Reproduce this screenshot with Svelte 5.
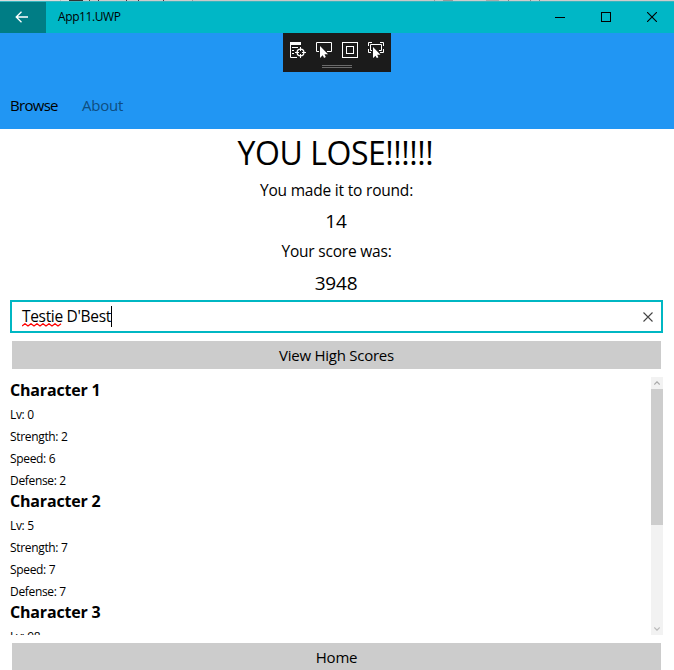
<script>
  const characters = [
    { name: 'Character 1', stats: ['Lv: 0', 'Strength: 2', 'Speed: 6', 'Defense: 2'] },
    { name: 'Character 2', stats: ['Lv: 5', 'Strength: 7', 'Speed: 7', 'Defense: 7'] },
    { name: 'Character 3', stats: ['Lv: 98'] }
  ];
  const pointer = 'M0 0V12L2.7 9.3L4.1 12L5.8 11.1L4.5 8.3H8Z';
</script>

<div class="window">
  <div class="backdrop"></div>
  <header class="titlebar">
    <div class="back">
      <svg width="14" height="12" viewBox="0 0 14 12"><path d="M6.5 .7L1.2 6L6.5 11.3M1.2 6H13" fill="none" stroke="#fff" stroke-width="1.3" /></svg>
    </div>
    <span class="title">App11.UWP</span>
    <div class="controls">
      <div><svg width="10" height="10"><path d="M0 5.5H10" stroke="#000" /></svg></div>
      <div><svg width="10" height="10"><rect x=".5" y=".5" width="9" height="9" fill="none" stroke="#000" /></svg></div>
      <div><svg width="10" height="10"><path d="M0 0L10 10M10 0L0 10" stroke="#000" stroke-width="1.1" /></svg></div>
    </div>
  </header>

  <nav>
    <span class="active">Browse</span>
    <span class="about">About</span>
    <div class="debug">
      <div class="tools">
        <svg width="16" height="16">
          <path d="M0 0H11V3H0Z" fill="#fff" />
          <path d="M.5 2V15.5H7M2 5.5H8M2 8.5H4M2 11.5H4" fill="none" stroke="#fff" />
          <circle cx="10.5" cy="10.5" r="3.4" fill="none" stroke="#fff" stroke-width="1.3" />
          <path d="M10.5 5V9M10.5 12V16M5 10.5H9M12 10.5H16" stroke="#fff" />
        </svg>
        <svg width="16" height="16">
          <path d="M3 9.5H.5V.5H15.5V9.5H11" fill="none" stroke="#fff" />
          <path d={pointer} fill="#fff" transform="translate(4 4)" />
        </svg>
        <svg width="16" height="16">
          <rect x=".5" y=".5" width="15" height="15" fill="none" stroke="#fff" />
          <rect x="4.5" y="4.5" width="7" height="7" fill="none" stroke="#fff" />
        </svg>
        <svg width="16" height="16">
          <path d="M.5 4V.5H4M12 .5H15.5V4M.5 7V10.5H3M12 10.5H15.5V7M4 8.5H2.5V2.5H13.5V8.5H11" fill="none" stroke="#fff" />
          <path d={pointer} fill="#fff" transform="translate(5 5) scale(.93)" />
        </svg>
      </div>
      <div class="grip"></div>
    </div>
  </nav>

  <main>
    <h1>YOU LOSE!!!!!!</h1>
    <p class="label round">You made it to round:</p>
    <p class="value">14</p>
    <p class="label score">Your score was:</p>
    <p class="value">3948</p>

    <div class="field">
      <span class="entry"><span class="word">Testie<svg class="squiggle" width="40" height="4"><path d="M0 3L3 .7L6 3L9 .7L12 3L15 .7L18 3L21 .7L24 3L27 .7L30 3L33 .7L36 3L39 .7" fill="none" stroke="#f00" stroke-width="1.2" /></svg></span> D'Best</span><i class="caret"></i>
      <svg class="clear" width="10" height="10"><path d="M.5 .5L9.5 9.5M9.5 .5L.5 9.5" stroke="#444" stroke-width="1.1" /></svg>
    </div>

    <div class="button scores"><span>View High Scores</span></div>

    <section class="list">
      <div class="rows">
        {#each characters as c}
          <h2>{c.name}</h2>
          {#each c.stats as stat}
            <p>{stat}</p>
          {/each}
        {/each}
      </div>
      <div class="scrollbar">
        <div class="arrow"><svg width="6" height="4"><path d="M.3 3.5L3 .8L5.7 3.5" fill="none" stroke="#aaa" stroke-width="1.2" /></svg></div>
        <div class="thumb"></div>
        <div class="track"></div>
        <div class="arrow"><svg width="6" height="4"><path d="M.3 .5L3 3.2L5.7 .5" fill="none" stroke="#bbb" stroke-width="1.2" /></svg></div>
      </div>
    </section>

    <div class="button home"><span>Home</span></div>
  </main>
</div>

<style>
  .window { width: 674px; height: 670px; overflow: hidden; background: #fff; color: #000; font-family: "Open Sans", "Noto Sans", sans-serif; display: flex; flex-direction: column; }
  .window * { box-sizing: border-box; }
  svg { display: block; flex: none; }
  h1, h2, p { margin: 0; font-weight: 400; white-space: nowrap; }
  .backdrop { height: 2px; flex: none; border-bottom: 1px solid #35b5bf; background: linear-gradient(90deg, #ddd 0 60px, #bbb 60px 61px, #ddd 61px 69px, #333 69px 83px, #ccc 83px 89px, #543 89px 90px, #ccc 90px 98px, #503040 98px 99px, #ccc 99px 126px, #503040 126px 127px, #ccc 127px 138px, #503040 138px 139px, #ccc 139px 163px, #503040 163px 164px, #ccc 164px 192px, #999 192px 193px, #c8c8c8 193px 434px, #999 434px 435px, #c8c8c8 435px 443px, #999 443px 453px, #ccc 453px 486px, #aaa 486px 499px, #ccc 499px 508px, #888 508px 509px, #ccc 509px 530px, #888 530px 531px, #ccc 531px 539px, #888 539px 540px, #ccc 540px); }
  .titlebar { height: 31px; flex: none; background: #00b7c6; display: flex; align-items: center; }
  .back { width: 46px; height: 31px; background: #007d85; display: flex; align-items: center; padding: 0 0 2px 15px; }
  .title { margin-left: 12px; font-size: 12px; line-height: 18px; letter-spacing: -.4px; padding-bottom: 1px; }
  .controls { margin-left: auto; display: flex; }
  .controls div { width: 46px; height: 31px; padding: 10px 0 0 19px; }
  nav { position: relative; height: 96px; flex: none; background: #2196f3; display: flex; padding: 60px 0 0 10px; font-size: 15px; line-height: 24px; gap: 24px; }
  .active { width: 48px; letter-spacing: -.7px; }
  .about { color: #0e4d80; letter-spacing: -.2px; }
  .debug { position: absolute; left: 283px; top: 0; width: 108px; height: 39px; background: #1b1b1b; padding: 9px 7px 0; }
  .tools { display: flex; gap: 10px; }
  .grip { width: 30px; height: 3px; margin: 7px 0 0 32px; border: solid #6b6b6b; border-width: 1px 0; }
  main { display: flex; flex-direction: column; flex: 1; padding: 0 11px 0 10px; text-align: center; }
  h1 { height: 46px; font-size: 32px; line-height: 47px; letter-spacing: -.45px; margin-left: -2px; }
  .label { height: 31px; font-size: 15.5px; line-height: 31px; letter-spacing: -.2px; }
  .value { height: 30px; font-size: 19px; line-height: 30px; letter-spacing: -.2px; margin-left: -1px; }
  .score { height: 32px; }
  .field { height: 33px; flex: none; margin-top: 2px; border: 2px solid #00b7c3; display: flex; align-items: center; padding: 0 8px 0 10px; font-size: 15.5px; }
  .entry { white-space: nowrap; letter-spacing: -.32px; padding-bottom: 1px; }
  .word { position: relative; }
  .squiggle { position: absolute; left: 0; bottom: 0; }
  .caret { width: 1px; height: 21px; background: #000; margin-bottom: 1px; }
  .clear { margin-left: auto; }
  .button { margin: 8px 2px 0; height: 28px; flex: none; background: #ccc; font-size: 15px; line-height: 29px; letter-spacing: -.25px; }
  .list { height: 258px; flex: none; margin-top: 8px; display: flex; overflow: hidden; text-align: left; }
  .rows { flex: 1; padding-top: 2px; }
  h2 { height: 23px; font-size: 16px; line-height: 22px; font-weight: 700; letter-spacing: -.18px; }
  .rows p { height: 22px; padding-top: 4px; font-size: 12px; line-height: 18px; letter-spacing: -.33px; }
  .scrollbar { width: 12px; display: flex; flex-direction: column; background: #f2f2f2; }
  .arrow { height: 12px; display: flex; align-items: center; justify-content: center; }
  .thumb { height: 136px; background: #cdcdcd; }
  .track { flex: 1; }
</style>
